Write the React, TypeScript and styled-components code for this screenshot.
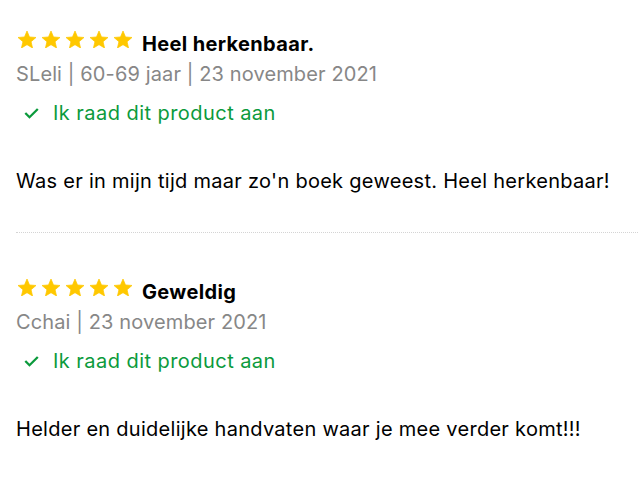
import React from "react";
import styled, { createGlobalStyle } from "styled-components";

type Review = {
  title: string;
  meta: string;
  body: string;
};

const reviews: Review[] = [
  {
    title: "Heel herkenbaar.",
    meta: "SLeli | 60-69 jaar | 23 november 2021",
    body: "Was er in mijn tijd maar zo'n boek geweest. Heel herkenbaar!",
  },
  {
    title: "Geweldig",
    meta: "Cchai | 23 november 2021",
    body: "Helder en duidelijke handvaten waar je mee verder komt!!!",
  },
];

const GlobalStyle = createGlobalStyle`
  body {
    margin: 0;
    background: #fff;
    font-family: Inter, "Liberation Sans", sans-serif;
    color: #000;
  }
`;

const List = styled.div`
  padding: 30px 0 0 16px;
`;

const Item = styled.div`
  padding-bottom: 37px;
  border-bottom: 1px dotted #d4d4d4;
  margin-bottom: 45px;

  &:last-child {
    border-bottom: none;
    margin-bottom: 0;
  }
`;

const Header = styled.div`
  display: flex;
  align-items: flex-start;
  gap: 10px;
`;

const Stars = styled.div`
  display: flex;
  gap: 6px;
  padding: 1px 0 0 2px;
`;

const Title = styled.span`
  font-size: 20px;
  font-weight: 700;
  line-height: 28px;
  letter-spacing: 0.35px;
`;

const Meta = styled.div`
  margin-top: 2px;
  font-size: 20px;
  line-height: 28px;
  letter-spacing: 0.12px;
  color: #878787;
`;

const Recommend = styled.div`
  display: flex;
  align-items: center;
  gap: 14px;
  margin-top: 11px;
  padding-left: 8px;
  font-size: 20px;
  line-height: 28px;
  letter-spacing: 0.45px;
  color: #0b9a3c;
`;

const Body = styled.p`
  margin: 40px 0 0;
  font-size: 20px;
  line-height: 28px;
  letter-spacing: 0.28px;
`;

const Star = () => (
  <svg width="18" height="17" viewBox="2 2 20 19" preserveAspectRatio="none">
    <path
      d="M12 17.27L18.18 21l-1.64-7.03L22 9.24l-7.19-.61L12 2 9.19 8.63 2 9.24l5.46 4.73L5.82 21z"
      fill="#ffc800"
      stroke="#ffc800"
      strokeWidth="0.8"
      strokeLinejoin="round"
    />
  </svg>
);

const Check = () => (
  <svg width="15" height="11" viewBox="0 0 15 11">
    <path d="M1.3 5l4.2 4.2L13.8 1" fill="none" stroke="#0b9a3c" strokeWidth="2.3" />
  </svg>
);

export default function App() {
  return (
    <>
      <GlobalStyle />
      <List>
        {reviews.map((r) => (
          <Item key={r.title}>
            <Header>
              <Stars>
                {[0, 1, 2, 3, 4].map((i) => (
                  <Star key={i} />
                ))}
              </Stars>
              <Title>{r.title}</Title>
            </Header>
            <Meta>{r.meta}</Meta>
            <Recommend>
              <Check />
              Ik raad dit product aan
            </Recommend>
            <Body>{r.body}</Body>
          </Item>
        ))}
      </List>
    </>
  );
}
